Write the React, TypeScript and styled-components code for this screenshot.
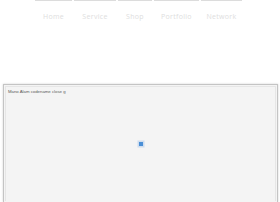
import React from 'react';
import styled, { createGlobalStyle } from 'styled-components';

const GlobalStyle = createGlobalStyle`
  html, body {
    margin: 0;
    padding: 0;
    background: #ffffff;
    font-family: 'Liberation Sans', Arial, sans-serif;
    overflow: hidden;
  }
`;

const Page = styled.div`
    width: 280px;
    height: 202px;
    display: flex;
    flex-direction: column;
`;

const Nav = styled.nav`
    display: flex;
    gap: 2px;
    height: 21px;
    padding-left: 35px;
`;

const NavItem = styled.span<{ $w: number }>`
    width: ${p => p.$w}px;
    border-top: 1.5px solid #dcdcdc;
    padding-top: 12px;
    text-align: center;
    font-family: 'Open Sans', sans-serif;
    font-size: 7px;
    line-height: 8px;
    letter-spacing: 0.3px;
    color: #dedede;
    white-space: nowrap;
`;

const Panel = styled.section`
    margin: 63px 2px 0 3px;
    flex: 1;
    border: 1px solid #c4c4c4;
    border-bottom: none;
    box-shadow: 0 0 2px rgba(0, 0, 0, 0.18);
    background: #f4f4f4;
    padding: 1px;
    display: flex;
`;

const Inner = styled.div`
    flex: 1;
    border: 1px solid #e6e6e6;
    border-bottom: none;
    padding: 2px 2px;
`;

const Caption = styled.div`
    font-size: 4.3px;
    line-height: 5px;
    color: #5a5a5a;
`;

const Center = styled.div`
    display: flex;
    justify-content: center;
    padding-top: 48px;
`;

const Dot = styled.div`
    width: 4px;
    height: 4px;
    background: #4a8fd6;
    box-shadow: 0 0 0 1.5px rgba(120, 170, 230, 0.3);
`;

const items = [
    { label: 'Home', w: 37 },
    { label: 'Service', w: 42 },
    { label: 'Shop', w: 34 },
    { label: 'Portfolio', w: 45 },
    { label: 'Network', w: 41 },
];

const App: React.FC = () => {
    return (
        <>
            <GlobalStyle />
            <Page>
                <Nav>
                    {items.map(i => (
                        <NavItem key={i.label} $w={i.w}>
                            {i.label}
                        </NavItem>
                    ))}
                </Nav>
                <Panel>
                    <Inner>
                        <Caption>Mano Alam codename close g</Caption>
                        <Center>
                            <Dot />
                        </Center>
                    </Inner>
                </Panel>
            </Page>
        </>
    );
};

export default App;
